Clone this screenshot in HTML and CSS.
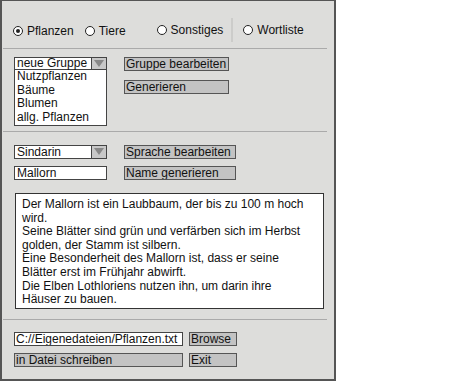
FILE: index.html
```html
<!DOCTYPE html>
<html lang="de">
<head>
    <meta charset="UTF-8">
    <title>Namensgenerator</title>
    <link rel="stylesheet" href="styles.css">
</head>
<body>

<div class="panel">

    <div class="modes">
        <label class="radio checked"><span class="dot"></span>Pflanzen</label>
        <label class="radio tiere"><span class="dot"></span>Tiere</label>
        <label class="radio sonst"><span class="dot"></span>Sonstiges</label>
        <span class="vsep"></span>
        <label class="radio wort"><span class="dot"></span>Wortliste</label>
    </div>

    <hr class="sep">

    <section class="row-block group">
        <div class="left">
            <div class="select open"><span>neue Gruppe</span><span class="arrow"></span></div>
            <ul class="dropdown">
                <li>Nutzpflanzen</li>
                <li>Bäume</li>
                <li>Blumen</li>
                <li>allg. Pflanzen</li>
            </ul>
        </div>
        <div class="right">
            <button class="btn">Gruppe bearbeiten</button>
            <button class="btn">Generieren</button>
        </div>
    </section>

    <hr class="sep">

    <section class="row-block lang">
        <div class="left">
            <div class="select"><span>Sindarin</span><span class="arrow"></span></div>
            <div class="field name">Mallorn</div>
        </div>
        <div class="right wide">
            <button class="btn">Sprache bearbeiten</button>
            <button class="btn">Name generieren</button>
        </div>
    </section>

    <div class="desc">
        Der Mallorn ist ein Laubbaum, der bis zu 100 m hoch wird.<br>
        Seine Blätter sind grün und verfärben sich im Herbst golden, der Stamm ist silbern.<br>
        Eine Besonderheit des Mallorn ist, dass er seine Blätter erst im Frühjahr abwirft.<br>
        Die Elben Lothloriens nutzen ihn, um darin ihre Häuser zu bauen.
    </div>

    <hr class="sep low">

    <section class="files">
        <div class="file-row">
            <div class="field path">C://Eigenedateien/Pflanzen.txt</div>
            <button class="btn small">Browse</button>
        </div>
        <div class="file-row">
            <button class="btn path">in Datei schreiben</button>
            <button class="btn small">Exit</button>
        </div>
    </section>

</div>

</body>
</html>
```

FILE: styles.css
```css
body {
    margin: 0;
    background: #fff;
    font-family: "Liberation Sans", Arial, sans-serif;
    font-size: 12px;
    color: #111;
}
.panel {
    box-sizing: border-box;
    width: 336px;
    height: 381px;
    background: #dddddb;
    border: 2px solid #555;
    border-top-width: 1px;
}
.modes {
    display: flex;
    align-items: center;
    height: 47px;
    padding-top: 13px;
    box-sizing: border-box;
}
.radio {
    display: flex;
    align-items: center;
    gap: 4px;
    white-space: nowrap;
}
.radio .dot {
    box-sizing: border-box;
    width: 10px;
    height: 10px;
    border: 1px solid #222;
    border-radius: 50%;
    background: #fff;
    position: relative;
}
.radio.checked .dot::after {
    content: "";
    position: absolute;
    left: 2px;
    top: 2px;
    width: 4px;
    height: 4px;
    border-radius: 50%;
    background: #222;
}
.radio.checked { margin-left: 11px; }
.tiere { margin-left: 11px; }
.sonst { margin-left: 31px; margin-top: -3px; }
.wort { margin-top: -3px; }
.vsep {
    width: 2px;
    height: 24px;
    margin: -3px 10px 0 8px;
    background: #ccccca;
}
.sep {
    border: 0;
    height: 1px;
    background: #aaa;
    margin: 0 0 0 1px;
    width: 324px;
}
.row-block {
    display: flex;
    padding-left: 12px;
}
.group {
    height: 82px;
    padding-top: 8px;
    box-sizing: border-box;
}
.left {
    width: 93px;
}
.right {
    display: flex;
    flex-direction: column;
    align-items: flex-start;
    margin-left: 17px;
    gap: 9px;
}
.select {
    box-sizing: border-box;
    display: flex;
    justify-content: space-between;
    height: 13px;
    background: #fff;
    border: 1px solid #444;
    line-height: 11px;
    padding-left: 2px;
    white-space: nowrap;
}
.arrow {
    width: 14px;
    border-left: 1px solid #444;
    background: #c8c8c8;
    position: relative;
}
.arrow::after {
    content: "";
    position: absolute;
    left: 2px;
    top: 2px;
    border-left: 5px solid transparent;
    border-right: 5px solid transparent;
    border-top: 7px solid #888;
}
.dropdown {
    list-style: none;
    margin: 0;
    padding: 0 0 0 2px;
    height: 56px;
    box-sizing: border-box;
    background: #fff;
    border: 1px solid #444;
    border-top: 0;
    line-height: 13.6px;
}
.btn {
    box-sizing: border-box;
    display: block;
    margin: 0;
    width: 105px;
    height: 14px;
    padding: 0 1px;
    text-align: left;
    white-space: nowrap;
    overflow: hidden;
    font-family: inherit;
    font-size: 12px;
    line-height: 11px;
    color: #111;
    background: #c3c3c3;
    border: 1px solid #555;
}
.lang {
    padding-top: 13px;
    height: 61px;
    box-sizing: border-box;
}
.lang .select { height: 14px; line-height: 12px; }
.wide .btn { width: 112px; }
.wide { gap: 7px; }
.field {
    box-sizing: border-box;
    background: #fff;
    border: 1px solid #444;
    height: 14px;
    line-height: 12px;
    padding-left: 2px;
    white-space: nowrap;
    overflow: hidden;
}
.name { margin-top: 7px; }
.desc {
    box-sizing: border-box;
    width: 309px;
    height: 116px;
    margin-left: 13px;
    padding: 4px 16px 0 6px;
    background: #fff;
    border: 1px solid #333;
    line-height: 13.6px;
}
.sep.low { margin-top: 10px; }
.files {
    display: flex;
    flex-direction: column;
    gap: 7px;
    padding: 12px 0 0 12px;
}
.file-row {
    display: flex;
    gap: 6px;
}
.path { width: 169px; }
.field.path { padding-left: 1px; }
.small { width: 48px; }
```
